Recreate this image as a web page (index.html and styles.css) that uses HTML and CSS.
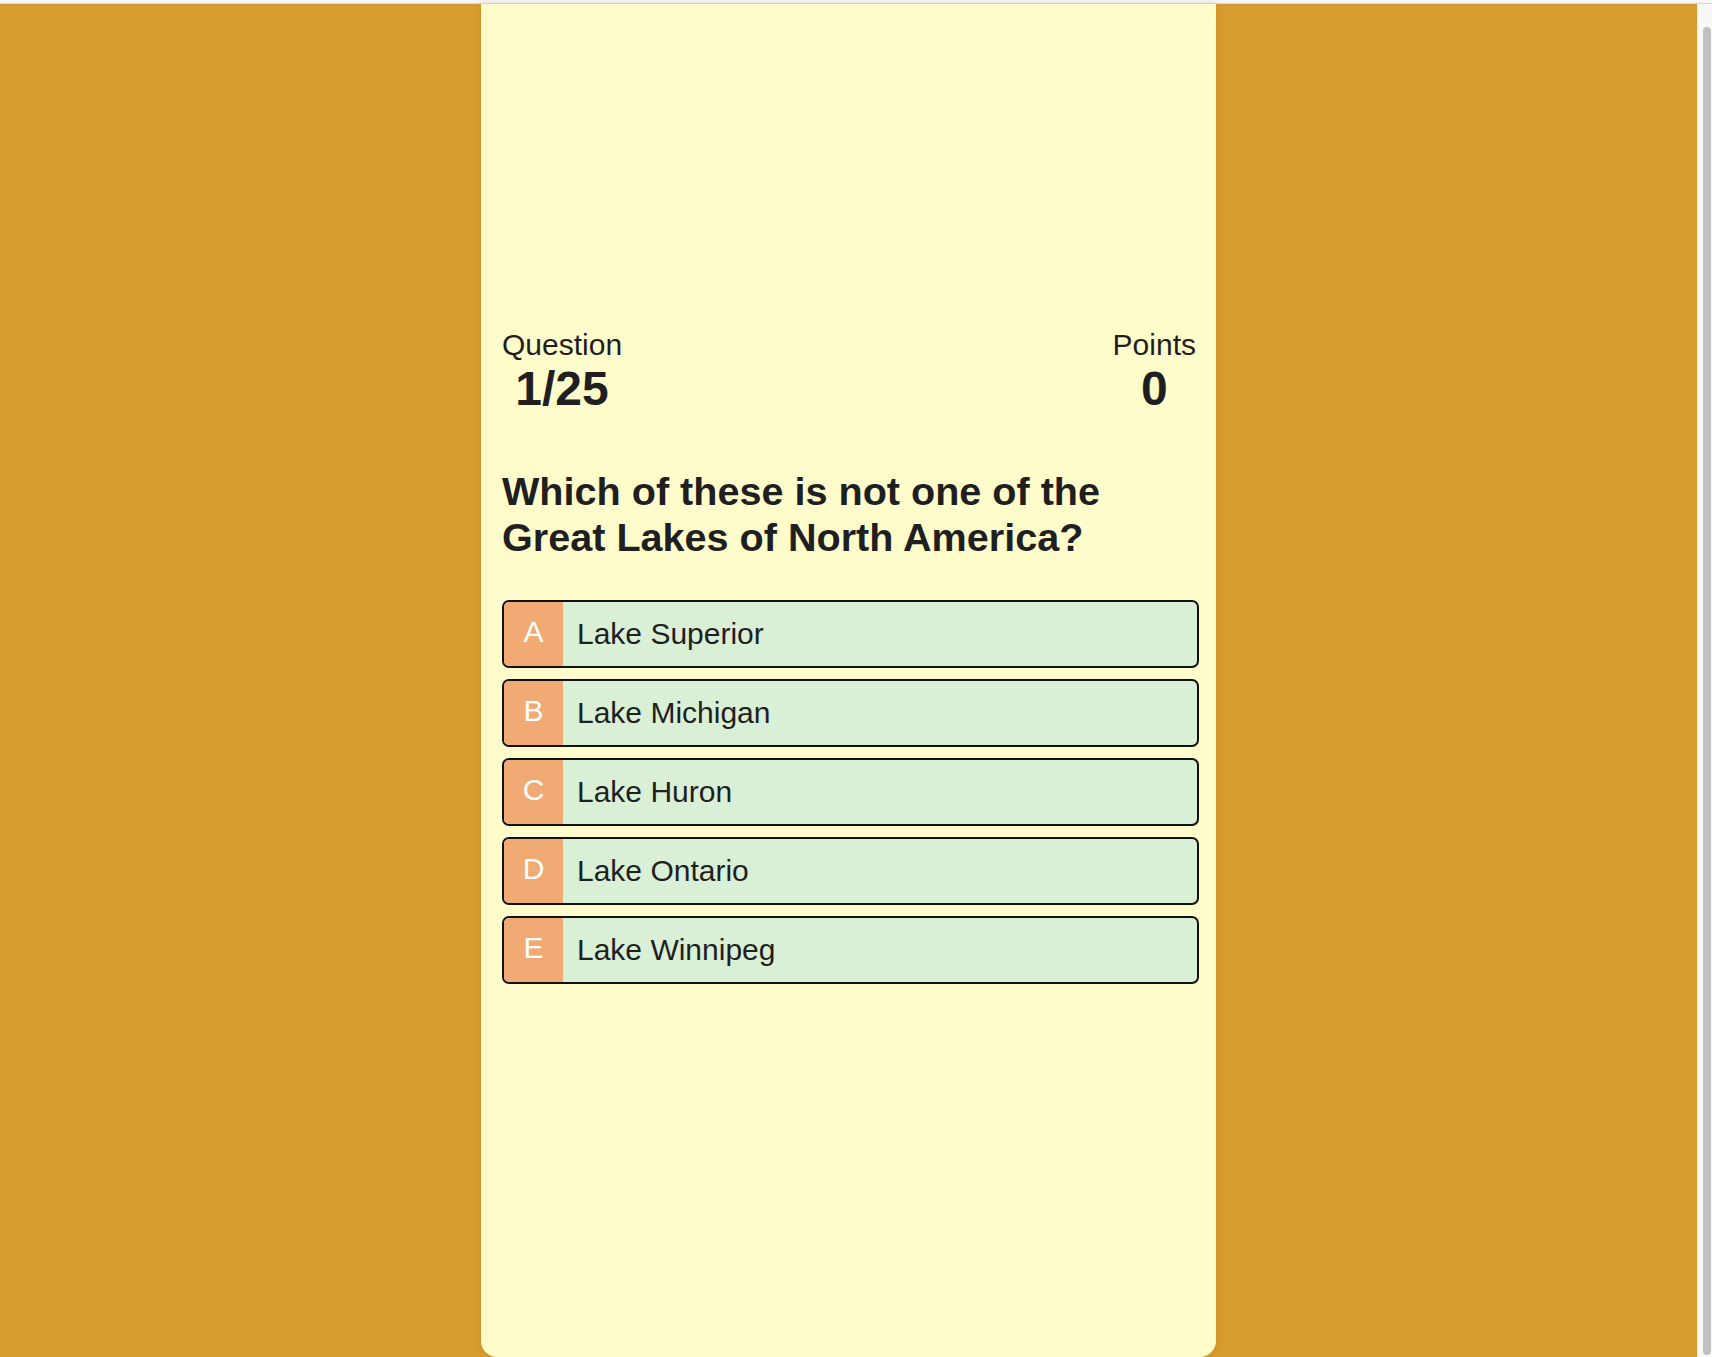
FILE: index.html
```html
<!DOCTYPE html>
<html lang="en">
<head>
<meta charset="utf-8">
<title>Quiz</title>
<link rel="stylesheet" href="styles.css">
</head>
<body>
<div class="chrome"></div>
<div class="window">
  <div class="page">
    <main class="card">
      <header class="stats">
        <div class="stat">
          <div class="stat-label">Question</div>
          <div class="stat-value">1/25</div>
        </div>
        <div class="stat stat-right">
          <div class="stat-label">Points</div>
          <div class="stat-value">0</div>
        </div>
      </header>
      <h2 class="question">Which of these is not one of the Great Lakes of North America?</h2>
      <ul class="options">
        <li class="option"><span class="letter">A</span><span class="answer">Lake Superior</span></li>
        <li class="option"><span class="letter">B</span><span class="answer">Lake Michigan</span></li>
        <li class="option"><span class="letter">C</span><span class="answer">Lake Huron</span></li>
        <li class="option"><span class="letter">D</span><span class="answer">Lake Ontario</span></li>
        <li class="option"><span class="letter">E</span><span class="answer">Lake Winnipeg</span></li>
      </ul>
    </main>
  </div>
  <div class="scrollbar"><div class="thumb"></div></div>
</div>
</body>
</html>
```
FILE: styles.css
```css
html, body {
  height: 100%;
}
body {
  margin: 0;
  display: flex;
  flex-direction: column;
  overflow: hidden;
  font-family: "Liberation Sans", Arial, Helvetica, sans-serif;
  color: #1f1f1f;
  background: #f7f7f7;
}
.chrome {
  flex: none;
  height: 3px;
  background: #f7f7f7;
  border-bottom: 1px solid #d8d8d8;
}
.window {
  flex: 1;
  display: flex;
  min-height: 0;
}
.page {
  flex: 1;
  background: #d99c2f;
}
.scrollbar {
  flex: none;
  box-sizing: border-box;
  width: 15px;
  display: flex;
  flex-direction: column;
  padding: 23px 2px 2px 5px;
  background: #f8f8f8;
  border-left: 1px solid #ececec;
}
.thumb {
  flex: 1;
  width: 8px;
  border-radius: 4px;
  background: #c1c1c1;
}
.card {
  box-sizing: border-box;
  width: 735px;
  height: 1353px;
  margin: 0 auto;
  padding: 324px 17px 0 21px;
  background: #fffccc;
  border-radius: 0 0 16px 16px;
  box-shadow: 0 0 8px rgba(120, 70, 0, 0.18);
}
.stats {
  display: flex;
  justify-content: space-between;
  align-items: flex-start;
}
.stat {
  text-align: center;
}
.stat-right {
  margin-right: 3px;
}
.stat-label {
  font-size: 30px;
  line-height: 34px;
}
.stat-value {
  font-size: 48px;
  line-height: 54px;
  font-weight: 700;
}
.question {
  margin: 52px 0 0;
  font-size: 39.6px;
  line-height: 46px;
  font-weight: 700;
}
.options {
  list-style: none;
  margin: 40px 0 0;
  padding: 0;
}
.option {
  box-sizing: border-box;
  display: flex;
  height: 68px;
  margin-bottom: 11px;
  border: 2px solid #111;
  border-radius: 7px;
  overflow: hidden;
  background: #d9efd6;
}
.letter {
  display: flex;
  align-items: center;
  justify-content: center;
  width: 59px;
  flex: none;
  padding-bottom: 4px;
  box-sizing: border-box;
  background: #f2aa74;
  color: #fff;
  font-size: 30px;
}
.answer {
  display: flex;
  align-items: center;
  padding-left: 14px;
  font-size: 30px;
}
```
